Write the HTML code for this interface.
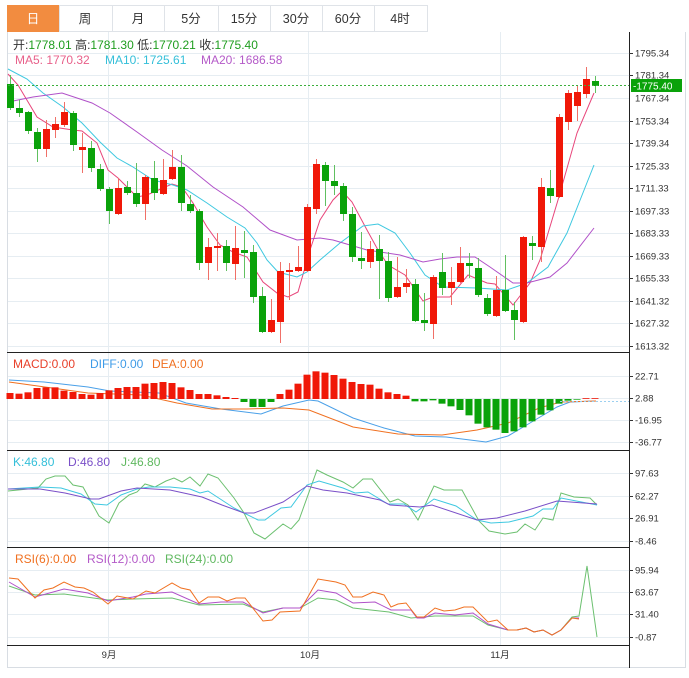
<!DOCTYPE html>
<html><head><meta charset="utf-8">
<style>
html,body{margin:0;padding:0;background:#fff;width:689px;height:678px;overflow:hidden;font-family:"Liberation Sans","Noto Sans CJK SC",sans-serif;}
svg{position:absolute;left:0;top:0}
</style></head><body>
<svg id="s" width="689" height="678" xmlns="http://www.w3.org/2000/svg" font-family="Liberation Sans, Noto Sans CJK SC, sans-serif">
<g id="grid" stroke="#e6edf2" stroke-width="1"></g>
<!-- tabs -->
<rect x="7.5" y="5.5" width="420" height="26" fill="#fff" stroke="#dfe3e8"/>
<rect x="7" y="5" width="52" height="27" fill="#f28c40"/>
<g stroke="#dfe3e8"><line x1="59.5" y1="5" x2="59.5" y2="31"/><line x1="112.5" y1="5" x2="112.5" y2="31"/><line x1="164.5" y1="5" x2="164.5" y2="31"/><line x1="218.5" y1="5" x2="218.5" y2="31"/><line x1="270.5" y1="5" x2="270.5" y2="31"/><line x1="322.5" y1="5" x2="322.5" y2="31"/><line x1="374.5" y1="5" x2="374.5" y2="31"/></g>
<g font-size="12.5" text-anchor="middle" fill="#333"><text x="33" y="23" fill="#fff">日</text><text x="85" y="23">周</text><text x="138" y="23">月</text><text x="191" y="23">5分</text><text x="244" y="23">15分</text><text x="296" y="23">30分</text><text x="348" y="23">60分</text><text x="400" y="23">4时</text></g>
<!-- frame -->
<g stroke="#d8dde3" fill="none"><line x1="7.5" y1="32" x2="7.5" y2="668"/><line x1="7" y1="667.5" x2="686" y2="667.5"/><line x1="685.5" y1="32" x2="685.5" y2="668"/></g>
<g stroke="#222"><line x1="629.5" y1="32" x2="629.5" y2="668"/><line x1="7" y1="352.5" x2="629" y2="352.5"/><line x1="7" y1="450.5" x2="629" y2="450.5"/><line x1="7" y1="547.5" x2="629" y2="547.5"/><line x1="7" y1="645.5" x2="629" y2="645.5"/></g>
<g id="lines" fill="none" stroke-width="1"></g>
<g id="cand"></g>
<line x1="8" y1="85.5" x2="629" y2="85.5" stroke="#3cae3c" stroke-dasharray="2,2"/>
<line x1="560" y1="401.5" x2="629" y2="401.5" stroke="#9cd0f0" stroke-dasharray="2,2"/>
<g id="ax" font-size="9.5" fill="#333"></g>
<rect x="631" y="79" width="51" height="13" fill="#0aa20a"/>
<text x="633" y="89.5" font-size="10" fill="#fff">-1775.40</text>
<g font-size="12">
<text x="13" y="49" fill="#333">开:<tspan fill="#1f9d1f">1778.01</tspan>  高:<tspan fill="#1f9d1f">1781.30</tspan>  低:<tspan fill="#1f9d1f">1770.21</tspan>  收:<tspan fill="#1f9d1f">1775.40</tspan></text>
<text x="15" y="64" fill="#e8608a">MA5: 1770.32</text><text x="105" y="64" fill="#34bfd9">MA10: 1725.61</text><text x="201" y="64" fill="#b45ac8">MA20: 1686.58</text>
<text x="13" y="368" fill="#e8402a">MACD:0.00</text><text x="90" y="368" fill="#3d9be8">DIFF:0.00</text><text x="152" y="368" fill="#f07020">DEA:0.00</text>
<text x="13" y="466" fill="#34bfd9">K:46.80</text><text x="68" y="466" fill="#7a50c8">D:46.80</text><text x="121" y="466" fill="#5fb85f">J:46.80</text>
<text x="15" y="563" fill="#f07020">RSI(6):0.00</text><text x="87" y="563" fill="#b45ac8">RSI(12):0.00</text><text x="165" y="563" fill="#5fb85f">RSI(24):0.00</text>
</g>
<g font-size="9.5" fill="#333" text-anchor="middle"><text x="109" y="658">9月</text><text x="310" y="658">10月</text><text x="500" y="658">11月</text></g>
</svg>
<script>
var NS="http://www.w3.org/2000/svg";
function el(p,t,a){var e=document.createElementNS(NS,t);for(var k in a)e.setAttribute(k,a[k]);document.getElementById(p).appendChild(e);return e;}
// grid
var gy=[53,75,98,121,143,166,188,211,233,256,278,301,323,346, 376,398,420,442, 473,496,518,541, 570,592,614,637];
gy.forEach(function(y){el('grid','line',{x1:8,x2:629,y1:y+.5,y2:y+.5});});
[108,308,500].forEach(function(x){el('grid','line',{x1:x+.5,x2:x+.5,y1:32,y2:645});});
// axis labels
var labs=[[53,'1795.34'],[75,'1781.34'],[98,'1767.34'],[121,'1753.34'],[143,'1739.34'],[166,'1725.33'],[188,'1711.33'],[211,'1697.33'],[233,'1683.33'],[256,'1669.33'],[278,'1655.33'],[301,'1641.32'],[323,'1627.32'],[346,'1613.32'],[376,'22.71'],[398,'2.88'],[420,'-16.95'],[442,'-36.77'],[473,'97.63'],[496,'62.27'],[518,'26.91'],[541,'-8.46'],[570,'95.94'],[592,'63.67'],[614,'31.40'],[637,'-0.87']];
labs.forEach(function(l){if(l[0]==98)return;el('ax','line',{x1:629,x2:633,y1:l[0]+.5,y2:l[0]+.5,stroke:'#333'});var t=el('ax','text',{x:635,y:l[0]+3.5});t.textContent=(l[1][0]=='-'?'':'')+l[1];});
var t=el('ax','text',{x:635,y:101.5});t.textContent='1767.34';
// candles: [up?, bodyTop, bodyBot, wickHi, wickLo]
var C=[[0,84,108,75,110],[0,108,113,100,117],[0,112,131,111,134],[0,132,149,128,162],[1,129,149,120,157],[1,124,130,117,138],[1,112,125,102,127],[0,113,145,111,151],[1,147,150,133,173],[0,148,168,141,172],
[0,169,189,164,191],[0,189,211,187,224],[1,188,214,178,215],[0,187,193,181,195],[0,193,204,163,207],[1,177,204,175,220],[0,178,193,161,200],[1,180,194,159,195],[1,167,179,150,180],[0,167,203,155,211],
[0,204,211,195,213],[0,211,263,209,270],[1,247,263,238,280],[1,246,248,233,271],[0,246,263,240,271],[1,248,264,226,280],[0,250,253,231,278],[0,252,297,245,303],[0,296,332,287,333],[1,320,332,299,333],
[1,271,322,262,343],[1,270,272,263,300],[1,267,271,246,272],[1,207,271,204,272],[1,164,209,159,214],[0,165,181,162,206],[0,181,186,165,195],[0,186,214,183,221],[0,214,257,207,262],[0,258,261,232,269],
[1,249,262,241,268],[0,249,261,235,299],[0,261,298,252,302],[1,287,297,257,298],[1,283,287,269,293],[0,284,321,279,322],[0,320,323,293,331],[1,277,324,275,339],[0,272,288,253,295],[1,282,288,267,305],
[1,263,282,247,283],[0,263,266,253,278],[0,268,295,258,297],[0,298,314,294,316],[1,290,316,276,317],[0,290,311,255,312],[0,310,320,302,340],[1,237,322,236,323],[0,243,246,236,260],[1,187,247,178,262],
[0,188,196,170,203],[1,117,197,114,198],[1,93,122,90,130],[1,92,106,86,121],[1,79,94,67,98],[0,81,86,76,93]];
C.forEach(function(c,i){var x=10+9*i,col=c[0]?'#f01808':'#0aa20a',wc=c[0]?'#f07068':'#60c060';
el('cand','line',{x1:x+.5,x2:x+.5,y1:c[3],y2:c[4],stroke:wc});
el('cand','rect',{x:x-3,y:c[1],width:7,height:Math.max(2,c[2]-c[1]),fill:col});});
// macd bars
var M=[165,167,163,150,148,148,158,162,168,170,165,157,150,147,147,137,135,132,135,148,156,168,168,172,177,180,192,207,207,192,168,155,137,110,100,104,111,122,132,138,140,152,163,168,173,190,190,187,197,205,216,232,257,268,275,285,280,268,250,230,217,197,188,185,183,183];
M.forEach(function(m,i){var x=10+9*i,h=(183-m)/3;if(Math.abs(h)<0.5)h=h<0?-0.8:0.8;
if(h>0)el('cand','rect',{x:x-3.5,y:399-h,width:7,height:h,fill:'#f01808'});else el('cand','rect',{x:x-3.5,y:399,width:7,height:-h,fill:'#0aa20a'});});
function pl(pts,col){el('lines','polyline',{points:pts,stroke:col});}
pl("8,74 18,85 37,117 53,127 73,130 82,131 97,143 108,170 118,178 137,197 147,195 163,188 172,184 182,187 193,203 207,227 220,245 233,252 247,257 263,282 277,293 288,297 298,292 310,250 320,220 333,200 342,191 352,202 367,230 378,250 388,265 405,275 423,301 433,297 450,297 468,275 487,283 495,284 513,305 530,283 540,260 558,200 577,133 594,93","#e8457a");
pl("8,69 27,79 43,93 63,107 82,123 100,142 117,158 133,167 153,180 173,185 187,190 207,203 227,217 245,228 257,243 267,260 278,272 297,277 307,272 320,260 340,243 363,226 378,224 395,233 410,253 425,275 443,287 477,288 507,290 527,283 548,267 567,233 594,165","#3ec8e0");
pl("8,102 33,97 62,93 92,103 110,113 137,132 162,150 187,166 213,187 243,207 270,230 297,240 320,238 333,240 367,250 400,255 423,262 440,259 457,257 475,257 490,267 513,283 527,283 550,277 567,263 594,228","#b050c8");
pl("9,380 44,382 88,387 110,391 159,393 186,403 221,409 261,414 283,406 309,400 318,401 353,418 384,428 415,436 446,437 486,442 508,436 530,423 557,407 570,402 596,401","#4aa0e8");
pl("9,382 88,393 141,395 177,403 212,409 247,409 283,408 309,410 353,427 398,434 442,435 477,430 508,423 539,408 561,402 596,401","#f07020");
pl("8,491 38,488 46,479 55,476 65,476 73,485 83,487 99,516 109,523 119,503 129,495 137,492 145,484 155,487 166,481 174,478 182,482 190,477 200,486 208,474 218,478 234,498 244,513 254,533 265,539 283,524 291,529 299,520 317,470 327,475 343,482 353,488 363,479 372,479 390,502 398,499 408,505 418,520 434,486 444,490 462,490 479,521 489,531 505,534 517,532 525,524 535,530 543,518 553,520 561,493 574,497 590,498 597,505","#6cc070");
pl("8,489 40,487 61,488 81,494 95,504 107,505 121,495 137,489 149,487 170,487 190,489 200,493 208,491 234,508 244,513 258,520 265,520 281,508 291,507 307,485 319,481 343,488 355,493 368,492 388,504 404,504 416,512 434,499 456,506 477,520 491,523 509,522 533,516 543,509 553,509 561,498 597,505","#3ec8e0");
pl("8,489 40,489 65,493 91,499 99,499 121,491 137,488 170,490 202,497 222,505 244,513 254,513 283,502 307,486 323,490 347,493 380,500 390,505 420,507 432,505 477,520 497,518 525,511 557,501 597,504","#7a50c8");
pl("9,586 35,595 64,594 108,600 133,599 172,598 199,605 243,604 263,612 283,608 300,608 318,598 336,600 353,608 389,612 411,618 435,616 473,616 488,625 508,630 517,630 526,628 534,632 543,630 552,635 561,630 572,617 579,616 587,566 597,637","#6cc070");
pl("9,582 35,597 64,589 88,593 108,601 133,597 146,594 172,592 199,604 221,602 243,602 263,613 283,608 300,608 318,590 336,593 353,603 375,602 391,610 411,610 417,618 424,618 435,613 455,615 473,613 488,624 508,630 517,630 526,628 534,632 543,630 552,635 561,630 572,618 579,618","#b050c8");
pl("9,578 18,579 35,598 44,590 53,588 64,582 75,587 84,588 93,592 108,604 117,596 133,599 146,591 155,593 172,583 181,588 190,590 199,603 208,597 219,597 227,601 236,598 245,598 263,621 272,620 280,612 300,611 318,579 336,582 345,585 353,597 362,597 373,592 384,595 391,607 398,604 406,603 417,617 424,617 435,608 444,611 455,610 464,607 473,607 488,622 497,620 508,630 517,630 526,628 534,632 543,630 552,635 561,630 572,618 579,619","#f07020");
</script>
</body></html>
